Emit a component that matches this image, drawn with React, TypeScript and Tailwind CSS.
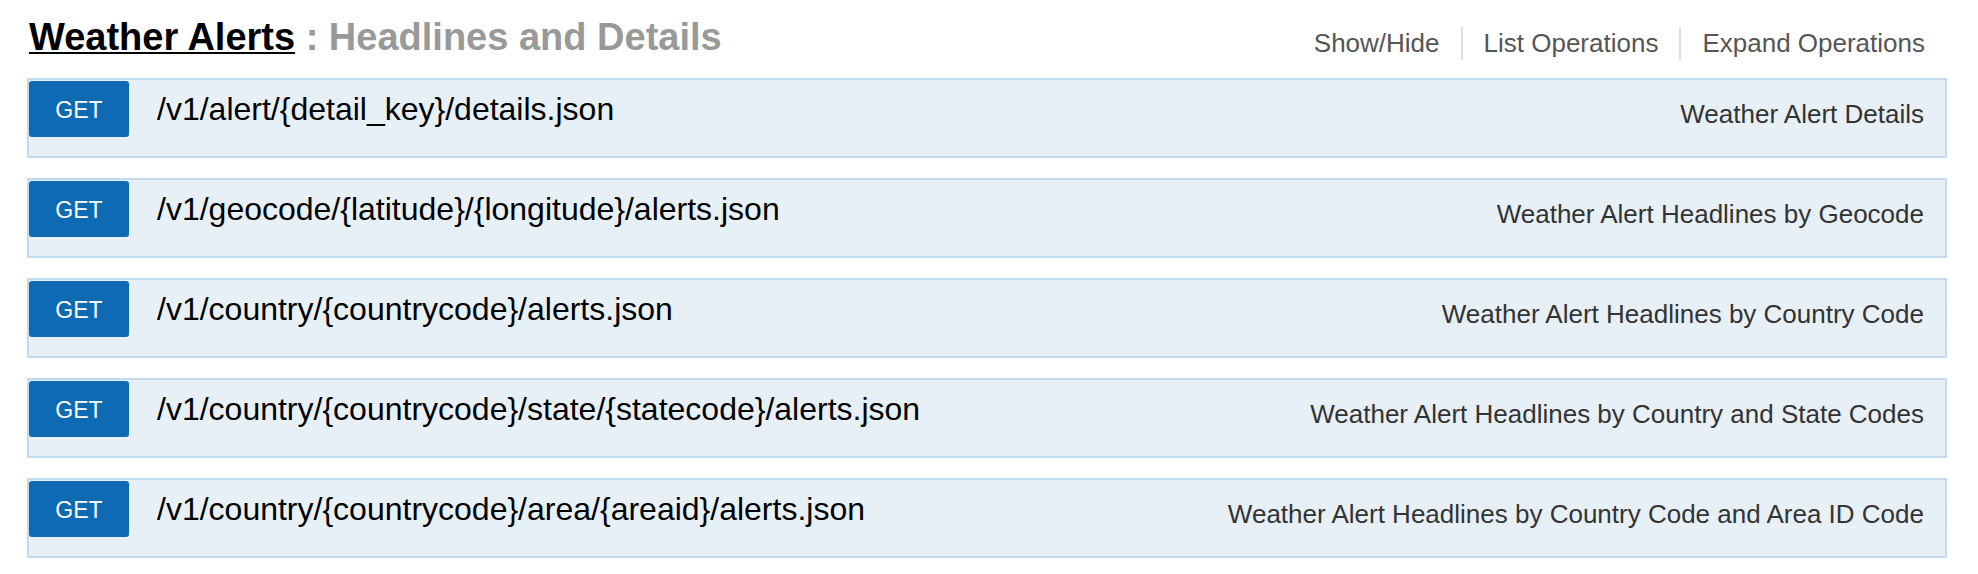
import React from "react";

const rows = [
  { path: "/v1/alert/{detail_key}/details.json", desc: "Weather Alert Details" },
  { path: "/v1/geocode/{latitude}/{longitude}/alerts.json", desc: "Weather Alert Headlines by Geocode" },
  { path: "/v1/country/{countrycode}/alerts.json", desc: "Weather Alert Headlines by Country Code" },
  { path: "/v1/country/{countrycode}/state/{statecode}/alerts.json", desc: "Weather Alert Headlines by Country and State Codes" },
  { path: "/v1/country/{countrycode}/area/{areaid}/alerts.json", desc: "Weather Alert Headlines by Country Code and Area ID Code" },
];

export default function App() {
  return (
    <div className="w-[1978px] h-[574px] bg-white font-['Liberation_Sans',Arial,sans-serif] pl-[27px]">
      <div className="w-[1920px]">
        <div className="flex items-start justify-between h-[78px]">
          <h2 className="mt-[18px] ml-[2px] text-[38px] leading-[38px] font-bold whitespace-nowrap">
            <a className="text-black underline decoration-2 underline-offset-[2px]">Weather Alerts</a>
            <span className="text-[#999999]"> : Headlines and Details</span>
          </h2>
          <ul className="mt-[27px] mr-px flex text-[26px] leading-[33px] text-[#555555]">
            <li className="px-[21px]">Show/Hide</li>
            <li className="px-[21px] border-l-2 border-[#dddddd]">List Operations</li>
            <li className="px-[21px] border-l-2 border-[#dddddd]">Expand Operations</li>
          </ul>
        </div>
        <div className="flex flex-col gap-[20px]">
          {rows.map((r) => (
            <div
              key={r.path}
              className="h-[80px] border-2 border-[#c3d9ec] bg-[#e7f0f7] flex items-start pt-px"
            >
              <div className="w-[100px] h-[56px] shrink-0 flex items-center justify-center pt-[3px] rounded-[3px] bg-[#0f6ab4] text-white text-[23px] leading-none">
                GET
              </div>
              <div className="ml-[28px] h-[56px] flex items-center text-[32px] leading-none text-black whitespace-nowrap">
                {r.path}
              </div>
              <div className="ml-auto mt-[1px] h-[64px] flex items-center pr-[21px] text-[26px] leading-none text-[#333333] whitespace-nowrap">
                {r.desc}
              </div>
            </div>
          ))}
        </div>
      </div>
    </div>
  );
}
